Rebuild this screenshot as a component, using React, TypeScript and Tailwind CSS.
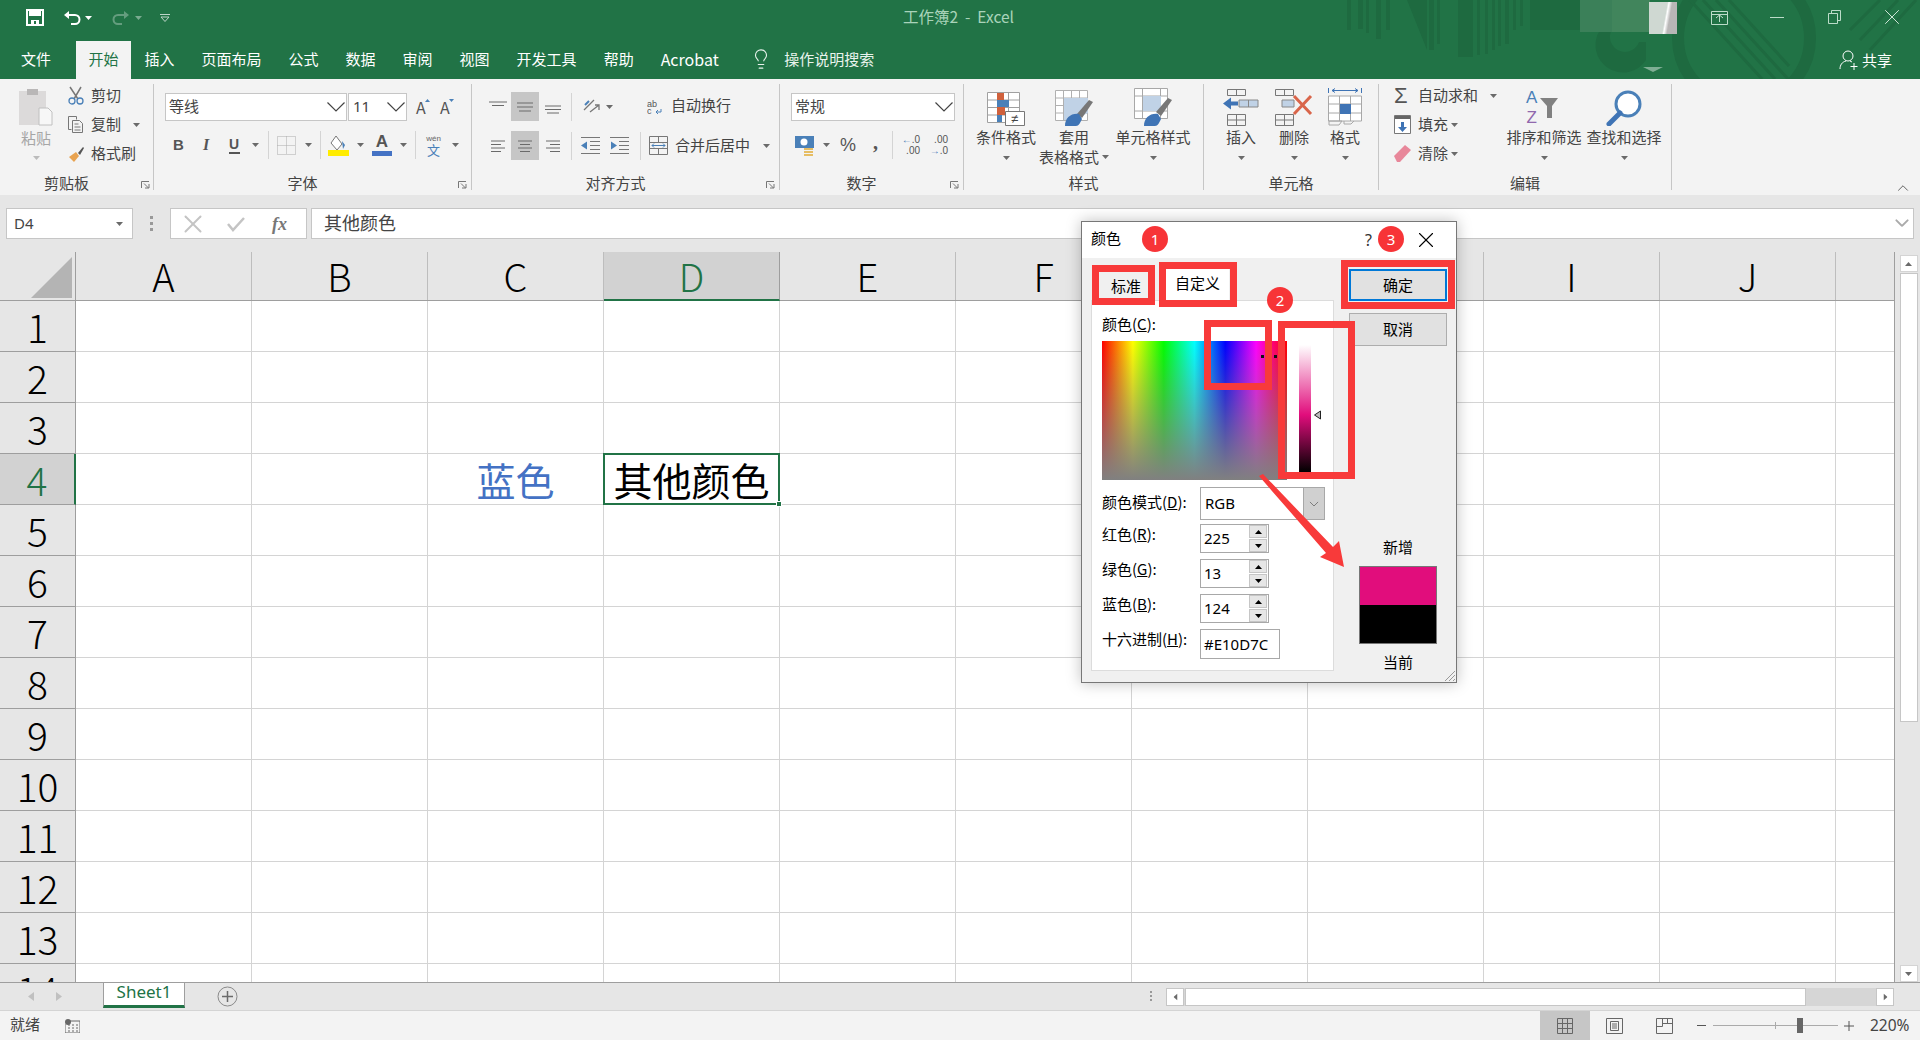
import type { ReactNode } from "react";
import { ChevronUp, Lightbulb, X } from "lucide-react";

const COLS = ["A", "B", "C", "D", "E", "F", "G", "H", "I", "J"];
// G and H sit behind the dialog
const HIDDEN_COLS = ["G", "H"];
const ROWS = [1, 2, 3, 4, 5, 6, 7, 8, 9, 10, 11, 12, 13, 14];
const TABS = ["插入", "页面布局", "公式", "数据", "审阅", "视图", "开发工具", "帮助"];

function Caret({ className = "" }: { className?: string }) {
  return (
    <svg width="7" height="4" viewBox="0 0 7 4" className={`shrink-0 ${className}`}>
      <path d="M0 0h7L3.5 4z" fill="#6a6a6a" />
    </svg>
  );
}

function Chev({ className = "" }: { className?: string }) {
  return (
    <svg width="18" height="10" viewBox="0 0 18 10" className={`shrink-0 ${className}`}>
      <path d="M.5.5L9 9 17.5.5" fill="none" stroke="#444" strokeWidth="1.2" />
    </svg>
  );
}

function Launcher({ className }: { className: string }) {
  return (
    <svg width="9" height="8" viewBox="0 0 9 8" className={`absolute bottom-[6px] ${className}`}>
      <path d="M.5 7V.5H8M3 2.5l4.5 4.5M4 7h4V3" fill="none" stroke="#777" />
    </svg>
  );
}

function Group({ width, label, launcher, children }: { width: string; label: string; launcher?: string; children: ReactNode }) {
  return (
    <div className={`relative flex h-full shrink-0 ${width}`}>
      <div className="flex min-w-0 flex-1 flex-col">
        <div className="h-[94px]">{children}</div>
        <div className={launcher ? "flex h-[20px] items-center justify-center pb-[2px] pr-[20px] text-[15px] leading-none text-[#444]" : "flex h-[20px] items-center justify-center pb-[2px] text-[15px] leading-none text-[#444]"}>
          <span>{label}</span>
        </div>
      </div>
      {launcher && <Launcher className={launcher} />}
      <div className="my-[5px] w-px bg-[#c6c6c6]" />
    </div>
  );
}

function Combo({ width, text }: { width: string; text: string }) {
  return (
    <div className={`flex h-[28px] items-center border border-[#c6c6c6] bg-white pb-px pl-[3px] pr-px text-[15px] text-[#444] ${width}`}>
      <span>{text}</span>
      <Chev className="ml-auto mt-px" />
    </div>
  );
}

function VDivider({ className }: { className: string }) {
  return <div className={`h-[28px] w-px bg-[#d4d4d4] ${className}`} />;
}

// small lines used by all six align buttons
function Lines({ d, className = "" }: { d: string; className?: string }) {
  return (
    <svg width="18" height="16" viewBox="0 0 18 16" className={className}>
      <path d={d} fill="none" stroke="#6a6a6a" strokeWidth="1" />
    </svg>
  );
}

function BigButton({ width, icon, text, second }: { width: string; icon: ReactNode; text: string; second?: string }) {
  return (
    <div className={`flex shrink-0 flex-col items-center ${width}`}>
      <div className="flex h-[47px] items-end justify-center">{icon}</div>
      <div className="mt-px flex h-[20px] items-center whitespace-nowrap text-[15px] text-[#444]">{text}</div>
      {second ? (
        <div className="flex h-[20px] items-center gap-[3px] whitespace-nowrap text-[15px] text-[#444]">
          <span>{second}</span>
          <Caret />
        </div>
      ) : (
        <div className="flex h-[22px] items-center">
          <Caret />
        </div>
      )}
    </div>
  );
}

function SmallRow({ icon, text, caret }: { icon: ReactNode; text: string; caret?: ReactNode }) {
  return (
    <div className="flex h-[29px] items-center text-[15px] text-[#444]">
      {icon}
      <span className="whitespace-nowrap">{text}</span>
      {caret}
    </div>
  );
}

function TitleArt() {
  return (
    <svg width="600" height="79" viewBox="1320 0 600 79" className="pointer-events-none absolute right-0 top-0">
      <g fill="#1e6a40">
        <path d="M1347 0h4v30h-4zM1358 0h5v29h-5zM1366 0h3v33h-3zM1376 0h5v39h-5zM1386 0h4v30h-4zM1429 0h5v50h-5zM1437 0h3v44h-3zM1458 0h15v57h-15zM1477 0h3v55h-3zM1485 0h3v54h-3zM1492 0h3v50h-3zM1498 0h3v46h-3zM1505 0h4v44h-4zM1513 0h3v30h-3zM1520 0h3v26h-3z" />
        <path d="M1407 0h20v50zM1530 0h52v30h-52z" />
        <path d="M1600 30a27 27 0 1 0 46 30v-18h-7a15 15 0 1 1-12-20v-1z" />
      </g>
      <rect x="1580" y="0" width="70" height="32" fill="#3b8059" />
      <rect x="1612" y="0" width="38" height="32" fill="#46885f" opacity=".6" />
      <circle cx="1744" cy="38" r="66" fill="none" stroke="#1e6a40" strokeWidth="12" />
      <path d="M1690 0l72 79M1703 0l72 79M1716 0l72 79M1729 0l60 66M1850 30l30-30M1860 40l38-40M1870 50l46-50" stroke="#1e6a40" strokeWidth="3" fill="none" />
      <path d="M1643 67h20l-10 5z" fill="#7fae94" />
    </svg>
  );
}

function TitleBar() {
  return (
    <div className="relative flex h-[41px] shrink-0 items-center pb-[6px]">
      <svg width="18" height="17" viewBox="0 0 18 17" className="ml-[26px]">
        <path d="M1 1h16v15H1z" fill="none" stroke="#fff" strokeWidth="2" />
        <path d="M3 1h12v6H3zM5 11h8v5H5z" fill="#fff" />
        <path d="M8 12h2v3H8z" fill="#217346" />
      </svg>
      <svg width="18" height="16" viewBox="0 0 18 16" className="ml-[19px]">
        <path d="M5 5h7a4.5 4.5 0 0 1 0 9H8" fill="none" stroke="#fff" strokeWidth="2" />
        <path d="M1 5l5-4v8z" fill="#fff" />
      </svg>
      <Caret className="ml-[4px] [&_path]:fill-white" />
      <svg width="18" height="16" viewBox="0 0 18 16" className="ml-[20px] opacity-30">
        <path d="M13 5H6a4.5 4.5 0 0 0 0 9h4" fill="none" stroke="#fff" strokeWidth="2" />
        <path d="M17 5l-5-4v8z" fill="#fff" />
      </svg>
      <Caret className="ml-[5px] opacity-40 [&_path]:fill-white" />
      <svg width="10" height="8" viewBox="0 0 10 8" className="ml-[18px] opacity-70">
        <path d="M0 .5h10M1 3h8L5 7.5z" fill="none" stroke="#fff" />
      </svg>
      <div className="-mt-[2px] ml-[733px] whitespace-nowrap text-[15.5px] text-[#a9d3ba]">工作簿2&nbsp; -&nbsp; Excel</div>
      <TitleArt />
      <div className="absolute right-[243px] top-[2px] h-[32px] w-[28px] bg-[linear-gradient(100deg,#cfd8d2_55%,#fff_60%,#b8b6b6_70%)]" />
      <svg width="18" height="14" viewBox="0 0 18 14" className="absolute left-[1711px] top-[11px]">
        <path d="M.5.5h16v13H.5zM1 3.5h15M5 7l3.5-3 3.5 3M8.5 4v7" fill="none" stroke="#bcdcc9" />
      </svg>
      <div className="absolute left-[1770px] top-[17px] h-px w-[14px] bg-[#bcdcc9]" />
      <svg width="13" height="14" viewBox="0 0 13 14" className="absolute left-[1828px] top-[10px]">
        <path d="M.5 3.5h9v10h-9zM3.5 3.5V.5h9v10h-3" fill="none" stroke="#bcdcc9" />
      </svg>
      <X size={26} strokeWidth={0.9} className="absolute left-[1879px] top-[4px] text-[#d3e8db]" />
    </div>
  );
}

function TabRow() {
  return (
    <div className="relative flex h-[38px] shrink-0 items-stretch pl-[7px] text-[15px] text-white">
      <div className="flex items-center px-[14px] pb-[2px]">文件</div>
      <div className="ml-[11px] flex w-[55px] items-center justify-center bg-[#f3f3f3] pb-[2px] text-[#217346]">开始</div>
      {TABS.map((t) => (
        <div key={t} className="flex items-center whitespace-nowrap px-[13.5px] pb-[2px]">{t}</div>
      ))}
      <div className="flex items-center whitespace-nowrap px-[13.5px] pb-[2px] text-[16px]">Acrobat</div>
      <div className="ml-[18px] flex items-center pb-[2px] text-[#e9f3ed]">
        <Lightbulb size={22} strokeWidth={1.2} />
        <span className="ml-[12px] text-[15px]">操作说明搜索</span>
      </div>
      <div className="ml-auto mr-[28px] flex items-center gap-[4px] text-[15px]">
        <svg width="19" height="20" viewBox="0 0 19 20">
          <path d="M4 6a5 5 0 1 1 10 0 5 5 0 0 1-10 0zM1 19c0-4 2-7 6-8M11 11l2 1M15 13v7M11.5 16.5h7" fill="none" stroke="#fff" strokeWidth="1" />
        </svg>
        <span>共享</span>
      </div>
    </div>
  );
}

function ClipboardGroup() {
  return (
    <Group width="w-[154px]" label="剪贴板" launcher="left-[141px]">
      <div className="flex">
        <div className="ml-[20px] flex w-[32px] flex-col items-center pt-[9px]">
          <svg width="34" height="38" viewBox="0 0 34 38" className="shrink-0">
            <path d="M0 3h27v34H0z" fill="#dcdada" />
            <path d="M8 1h11v6H8z" fill="#b9b7b7" />
            <path d="M20 20h9l4 4v13H20z" fill="#f7f7f7" stroke="#c0c0c0" />
          </svg>
          <div className="mt-[2px] text-[15px] leading-[20px] text-[#a6a6a6]">粘贴</div>
          <Caret className="mt-[8px] opacity-40" />
        </div>
        <div className="ml-[15px] pt-[2px]">
          <SmallRow
            text="剪切"
            icon={
              <svg width="18" height="19" viewBox="0 0 18 19" className="mr-[6px]">
                <path d="M3 1l8 12M14 1L7 13" stroke="#777" strokeWidth="1.5" fill="none" />
                <circle cx="5" cy="15" r="3" fill="none" stroke="#4a80b8" strokeWidth="1.3" />
                <circle cx="13" cy="15" r="3" fill="none" stroke="#4a80b8" strokeWidth="1.3" />
              </svg>
            }
          />
          <SmallRow
            text="复制"
            caret={<Caret className="ml-[12px]" />}
            icon={
              <svg width="18" height="19" viewBox="0 0 18 19" className="mr-[6px]">
                <path d="M1.5 1.5h8v3M1.5 1.5v13h3M5.5 5.5h7l3 3v9h-10zM7.5 9h4M7.5 12h6M7.5 15h6" stroke="#777" fill="none" />
              </svg>
            }
          />
          <SmallRow
            text="格式刷"
            icon={
              <svg width="18" height="18" viewBox="0 0 18 18" className="mr-[6px]">
                <path d="M11 8l5-6 1 1-4 7z" fill="#555" />
                <path d="M2 12l7-5 3 4-5 6z" fill="#e8a24f" />
              </svg>
            }
          />
        </div>
      </div>
    </Group>
  );
}

function FontGroup() {
  return (
    <Group width="w-[318px]" label="字体" launcher="left-[304px]">
      <div className="flex items-center pl-[11px] pt-[14px]">
        <Combo width="w-[182px]" text="等线" />
        <Combo width="ml-px w-[59px] !pl-[4px] font-['Noto_Sans']" text="11" />
        <span className="ml-[9px] flex h-[16px] w-[13px] items-start text-[16px] leading-[16px] text-[#555]">A</span>
        <svg width="5" height="3" viewBox="0 0 5 3" className="-ml-[4px] -mt-[14px]"><path d="M0 3h5L2.5 0z" fill="#4a80b8" /></svg>
        <span className="ml-[10px] flex h-[16px] w-[13px] items-start text-[16px] leading-[16px] text-[#555]">A</span>
        <svg width="5" height="3" viewBox="0 0 5 3" className="-ml-[4px] -mt-[14px]"><path d="M0 0h5L2.5 3z" fill="#4a80b8" /></svg>
      </div>
      <div className="mt-[10px] flex h-[28px] items-center pl-[19px] text-[#555]">
        <span className="w-[10px] font-['Liberation_Sans'] text-[15px] font-bold">B</span>
        <span className="ml-[20px] w-[8px] font-['Liberation_Serif'] text-[16px] font-bold italic">I</span>
        <span className="ml-[18px] w-[11px] border-b-2 border-[#555] font-['Liberation_Sans'] text-[14px] font-bold leading-[15px]">U</span>
        <Caret className="ml-[12px]" />
        <VDivider className="ml-[9px]" />
        <svg width="19" height="19" viewBox="0 0 19 19" className="ml-[8px]">
          <path d="M.5.5h18v18H.5zM9.5.5v18M.5 9.5h18" fill="none" stroke="#aaa" strokeDasharray="1 1" />
        </svg>
        <Caret className="ml-[9px]" />
        <VDivider className="ml-[8px]" />
        <svg width="21" height="21" viewBox="0 0 21 21" className="ml-[7px]">
          <path d="M8 1l6 8-5 6-6-7z" fill="#fff" stroke="#777" />
          <path d="M14 6l3 4-2 4z" fill="#4a80b8" />
          <path d="M0 15h21v6H0z" fill="#ffec00" />
        </svg>
        <Caret className="ml-[8px]" />
        <div className="ml-[8px] flex w-[20px] flex-col items-center">
          <span className="font-['Liberation_Sans'] text-[17px] font-semibold leading-[16px]">A</span>
          <span className="mt-[1px] h-[5px] w-[20px] bg-[#4472c4]" />
        </div>
        <Caret className="ml-[8px]" />
        <VDivider className="ml-[8px]" />
        <div className="ml-[9px] flex w-[17px] flex-col items-center leading-none text-[#4a80b8]">
          <span className="font-['Liberation_Sans'] text-[8px] text-[#666]">wén</span>
          <span className="text-[13px]">文</span>
        </div>
        <Caret className="ml-[10px]" />
      </div>
    </Group>
  );
}

function AlignGroup() {
  const top = "M0 3h18M3 6.5h12";
  const mid = "M1 4h16M1 8h16M3 12h12";
  const bot = "M1 7h16M1 10.5h16M3 14h12";
  const left = "M2 3h14M2 6.5h10M2 10h14M2 13.5h10";
  const center = "M2 3h14M4 6.5h10M2 10h14M4 13.5h10";
  const right = "M2 3h14M6 6.5h10M2 10h14M6 13.5h10";
  return (
    <Group width="w-[308px]" label="对齐方式" launcher="left-[294px]">
      <div className="flex items-center pl-[17px] pt-[13px]">
        <Lines d={top} />
        <div className="ml-[4px] flex h-[29px] w-[28px] items-center justify-center bg-[#c6c6c6]"><Lines d={mid} /></div>
        <Lines d={bot} className="ml-[5px]" />
        <VDivider className="ml-[9px]" />
        <svg width="19" height="19" viewBox="0 0 19 19" className="ml-[10px]">
          <path d="M2 13L12 3M8 15l9-7M13 8l4 0 0 5" fill="none" stroke="#777" strokeWidth="1.3" />
          <path d="M3 8l4-4" stroke="#4a80b8" strokeWidth="2" />
        </svg>
        <Caret className="ml-[5px]" />
        <svg width="16" height="16" viewBox="0 0 16 16" className="ml-[34px]">
          <text x="0" y="8" fontSize="9" fontFamily="Liberation Sans" fill="#555">ab</text>
          <text x="0" y="15" fontSize="9" fontFamily="Liberation Sans" fill="#555">c</text>
          <path d="M14 10v3H9m2-2l-2 2 2 2" fill="none" stroke="#4a80b8" />
        </svg>
        <span className="mb-[2px] ml-[8px] whitespace-nowrap text-[15px] text-[#444]">自动换行</span>
      </div>
      <div className="mt-[10px] flex items-center pl-[17px]">
        <Lines d={left} />
        <div className="ml-[4px] flex h-[29px] w-[28px] items-center justify-center bg-[#c6c6c6]"><Lines d={center} /></div>
        <Lines d={right} className="ml-[5px]" />
        <VDivider className="ml-[9px]" />
        <svg width="19" height="17" viewBox="0 0 19 17" className="ml-[9px]">
          <path d="M0 .5h19M9 4.5h10M9 8.5h10M9 12.5h10M0 16.5h19" stroke="#777" />
          <path d="M0 8.5l6-4v8z" fill="#4a80b8" />
        </svg>
        <svg width="19" height="17" viewBox="0 0 19 17" className="ml-[10px]">
          <path d="M0 .5h19M9 4.5h10M9 8.5h10M9 12.5h10M0 16.5h19" stroke="#777" />
          <path d="M7 8.5l-6-4v8z" fill="#4a80b8" />
        </svg>
        <VDivider className="ml-[11px]" />
        <svg width="19" height="19" viewBox="0 0 19 19" className="ml-[8px]">
          <path d="M.5.5h18v18H.5zM.5 6.5h18M.5 12.5h18M9.5.5v6M9.5 12.5v6" fill="none" stroke="#777" />
          <path d="M3 9.5h13M5 7.5l-2 2 2 2M14 7.5l2 2-2 2" fill="none" stroke="#4a80b8" />
        </svg>
        <span className="ml-[7px] whitespace-nowrap text-[15px] text-[#444]">合并后居中</span>
        <Caret className="ml-[13px]" />
      </div>
    </Group>
  );
}

function NumberGroup() {
  return (
    <Group width="w-[184px]" label="数字" launcher="left-[170px]">
      <div className="pl-[11px] pt-[14px]">
        <Combo width="w-[164px]" text="常规" />
      </div>
      <div className="mt-[10px] flex h-[28px] items-center pl-[15px] text-[#555]">
        <svg width="20" height="21" viewBox="0 0 20 21">
          <path d="M0 1h19v12H0z" fill="#4a80b8" />
          <circle cx="9" cy="7" r="3.5" fill="#fff" />
          <path d="M9 13h9v2H9zM9 16h9v2H9zM9 19h9v2H9z" fill="#e6bd63" />
        </svg>
        <Caret className="ml-[8px]" />
        <span className="ml-[10px] font-['Liberation_Sans'] text-[18px] leading-none">%</span>
        <span className="ml-[17px] -mt-[6px] font-['Liberation_Serif'] text-[20px] font-bold leading-none">,</span>
        <VDivider className="ml-[14px]" />
        <div className="ml-[10px] flex w-[17px] flex-col items-end font-['Liberation_Sans'] text-[10px] leading-[11px]">
          <span><b className="font-normal text-[#4a80b8]">←</b>.0</span>
          <span>.00</span>
        </div>
        <div className="ml-[11px] flex w-[17px] flex-col items-end font-['Liberation_Sans'] text-[10px] leading-[11px]">
          <span>.00</span>
          <span><b className="font-normal text-[#4a80b8]">→</b>.0</span>
        </div>
      </div>
    </Group>
  );
}

function StylesGroup() {
  return (
    <Group width="w-[240px]" label="样式">
      <div className="flex pl-[7px]">
        <BigButton
          width="w-[70px]"
          text="条件格式"
          icon={
            <svg width="38" height="34" viewBox="0 0 38 34">
              <path d="M.5.5h32v30H.5zM.5 8h32M.5 15.5h32M.5 23h22M10.5.5v30M21.5.5v22" fill="#fff" stroke="#a0a0a0" />
              <path d="M10 1h7v7h-7z" fill="#d0613c" />
              <path d="M10 8h12v7H10z" fill="#4a80b8" />
              <path d="M10 15h8v8h-8z" fill="#d0613c" />
              <path d="M10 23h5v7h-5z" fill="#4a80b8" />
              <path d="M18.5 19.5h19v14h-19z" fill="#fff" stroke="#777" />
              <text x="24" y="31" fontSize="13" fontFamily="Liberation Sans" fill="#444">≠</text>
            </svg>
          }
        />
        <BigButton
          width="w-[66px]"
          text="套用"
          second="表格格式"
          icon={
            <svg width="38" height="36" viewBox="0 0 38 36">
              <path d="M.5.5h32v30H.5zM.5 8h32M.5 15.5h32M.5 23h32M8.5.5v30M16.5.5v30M24.5.5v30" fill="#fff" stroke="#b0b0b0" />
              <path d="M9 8h24v15L18 30H9z" fill="#c0d2e6" />
              <path d="M38 12l-4-2-12 14 5 4z" fill="#777" />
              <path d="M10 36c0-8 6-13 14-12l3 5c-2 4-3 7-6 7z" fill="#3f74b5" />
            </svg>
          }
        />
        <BigButton
          width="w-[92px]"
          text="单元格样式"
          icon={
            <svg width="38" height="38" viewBox="0 0 38 38">
              <path d="M.5.5h33v30H.5zM.5 8h33M.5 23h33M8.5.5v30M26.5.5v30" fill="#fff" stroke="#a8a8a8" />
              <path d="M9 8h18v15H9z" fill="#c0d2e6" />
              <path d="M38 12l-4-2-12 14 5 4z" fill="#777" />
              <path d="M10 38c0-8 6-13 14-12l3 5c-2 4-3 7-6 7z" fill="#3f74b5" />
            </svg>
          }
        />
      </div>
    </Group>
  );
}

function CellsGroup() {
  return (
    <Group width="w-[175px]" label="单元格">
      <div className="flex pl-[12px]">
        <BigButton
          width="w-[50px]"
          text="插入"
          icon={
            <svg width="36" height="37" viewBox="0 0 36 37">
              <path d="M4.5.5h18v6h-18zM4.5 25.5h18v11h-18zM4.5 31h18M13.5.5v6M13.5 25.5v11" fill="none" stroke="#777" />
              <path d="M16 11h19v7H16zM25.5 11v7" fill="#c0d2e6" stroke="#888" />
              <path d="M0 14.5l8-6v4h7v4H8v4z" fill="#3f74b5" />
            </svg>
          }
        />
        <BigButton
          width="w-[56px]"
          text="删除"
          icon={
            <svg width="38" height="37" viewBox="0 0 38 37">
              <path d="M.5.5h18v6H.5zM.5 25.5h18v11H.5zM.5 31h18M9.5.5v6M9.5 25.5v11" fill="none" stroke="#777" />
              <path d="M7 11h12v7H7z" fill="#c0d2e6" stroke="#888" />
              <path d="M19 7l17 18M36 7L19 25" stroke="#d9654a" strokeWidth="3" />
            </svg>
          }
        />
        <BigButton
          width="w-[46px]"
          text="格式"
          icon={
            <svg width="34" height="38" viewBox="0 0 34 38">
              <path d="M.5 0v5M33.5 0v5M4 2.5h26M7 .5L4 2.5l3 2M27 .5l3 2-3 2" fill="none" stroke="#3f74b5" />
              <path d="M.5 8h33v25H.5zM.5 16h33M.5 25h33M11.5 8v25M22.5 8v25" fill="#fff" stroke="#a8a8a8" />
              <path d="M12 16h11v10H12z" fill="#3f74b5" />
              <path d="M1 33v4h10l3-4zM16 33v3h7l3-3" fill="none" stroke="#a8a8a8" />
            </svg>
          }
        />
      </div>
    </Group>
  );
}

function EditGroup() {
  return (
    <Group width="w-[293px]" label="编辑">
      <div className="flex">
        <div className="ml-[15px] w-[110px] pt-[2px]">
          <SmallRow
            text="自动求和"
            caret={<Caret className="ml-[12px]" />}
            icon={<span className="mr-[7px] w-[17px] font-['Liberation_Sans'] text-[22px] leading-none text-[#555]">Σ</span>}
          />
          <SmallRow
            text="填充"
            caret={<Caret className="ml-[3px]" />}
            icon={
              <svg width="17" height="19" viewBox="0 0 17 19" className="mr-[7px]">
                <path d="M.5.5h16v18H.5z" fill="#fff" stroke="#777" />
                <path d="M1 1h15v3H1z" fill="#666" />
                <path d="M7 7h3v5h3l-4.5 5L4 12h3z" fill="#3f74b5" />
              </svg>
            }
          />
          <SmallRow
            text="清除"
            caret={<Caret className="ml-[3px]" />}
            icon={
              <svg width="17" height="17" viewBox="0 0 17 17" className="mr-[7px]">
                <path d="M0 11L11 0l6 5L6 17H3z" fill="#e8879a" />
              </svg>
            }
          />
        </div>
        <BigButton
          width="w-[80px]"
          text="排序和筛选"
          icon={
            <div className="flex h-[38px] w-[36px] items-start font-['Liberation_Sans'] text-[17px] leading-[20px]">
              <div className="flex flex-col items-center">
                <span className="text-[#4a80b8]">A</span>
                <span className="text-[#9068ad]">Z</span>
              </div>
              <svg width="18" height="20" viewBox="0 0 18 20" className="ml-[3px] mt-[10px]">
                <path d="M0 0h18l-6 8v12H7V8z" fill="#808080" />
              </svg>
            </div>
          }
        />
        <BigButton
          width="w-[80px]"
          text="查找和选择"
          icon={
            <svg width="36" height="36" viewBox="0 0 36 36">
              <circle cx="22" cy="14" r="12" fill="#fff" stroke="#4a80b8" strokeWidth="3" />
              <path d="M14 23L3 34" stroke="#3f74b5" strokeWidth="5" strokeLinecap="round" />
            </svg>
          }
        />
      </div>
    </Group>
  );
}

function Ribbon() {
  return (
    <div className="relative flex h-[116px] shrink-0 bg-[#f3f3f3]">
      <ClipboardGroup />
      <FontGroup />
      <AlignGroup />
      <NumberGroup />
      <StylesGroup />
      <CellsGroup />
      <EditGroup />
      <ChevronUp size={18} strokeWidth={1.2} className="absolute left-[1894px] top-[100px] text-[#555]" />
    </div>
  );
}

function FormulaBar() {
  return (
    <div className="flex h-[57px] shrink-0 bg-[#e6e6e6] pl-[6px] pt-[13px]">
      <div className="flex h-[31px] w-[127px] items-center border border-[#c6c6c6] bg-white pl-[7px] font-['Noto_Sans'] text-[15px] text-[#444]">
        <span>D4</span>
        <Caret className="ml-auto mr-[9px]" />
      </div>
      <div className="ml-[16px] flex h-[31px] w-[5px] flex-col items-center justify-center gap-[3px]">
        <span className="size-[3px] bg-[#999]" />
        <span className="size-[3px] bg-[#999]" />
        <span className="size-[3px] bg-[#999]" />
      </div>
      <div className="ml-[16px] flex h-[31px] w-[137px] items-center border border-[#c6c6c6] bg-white pl-[7px]">
        <X size={30} strokeWidth={1.6} className="shrink-0 text-[#c4c4c4]" />
        <svg width="18" height="16" viewBox="0 0 18 16" className="ml-[19px] shrink-0">
          <path d="M1 8l5 6L17 2" fill="none" stroke="#c4c4c4" strokeWidth="2.5" />
        </svg>
        <span className="ml-[27px] font-['Liberation_Serif'] text-[18px] font-bold italic leading-none text-[#777]">fx</span>
      </div>
      <div className="ml-[4px] flex h-[31px] w-[1603px] items-center border border-[#c6c6c6] bg-white pb-[2px] pl-[12px] text-[18px] text-[#444]">
        <span>其他颜色</span>
        <Chev className="ml-auto mr-[2px] scale-75 [&_path]:stroke-[#aaa] [&_path]:stroke-[2.5px]" />
      </div>
    </div>
  );
}

function HeaderRow() {
  return (
    <div className="flex h-[49px] shrink-0 border-b border-[#9e9e9e]">
      <div className="flex w-[76px] shrink-0 border-r border-[#9e9e9e]">
        <svg width="41" height="41" viewBox="0 0 41 41" className="ml-[31px] mt-[5px]">
          <path d="M41 0v41H0z" fill="#b4b4b4" />
        </svg>
      </div>
      {COLS.map((c) => (
        <div
          key={c}
          className={
            c === "D"
              ? "-mb-px flex w-[176px] shrink-0 items-center justify-center border-b-2 border-r border-b-[#217346] border-r-[#9e9e9e] bg-[#d2d2d2] text-[38px] font-light leading-none text-[#217346]"
              : "flex w-[176px] shrink-0 items-center justify-center border-r border-[#bdbdbd] text-[38px] font-light leading-none text-black"
          }
        >
          {HIDDEN_COLS.includes(c) ? null : c}
        </div>
      ))}
    </div>
  );
}

function SheetRow({ n }: { n: number }) {
  const active = n === 4;
  return (
    <div className="flex h-[51px] shrink-0">
      <div
        className={
          active
            ? "flex w-[76px] shrink-0 items-center justify-center border-b border-r-2 border-b-[#9e9e9e] border-r-[#217346] bg-[#d2d2d2] text-[39px] font-light leading-none text-[#217346]"
            : "flex w-[76px] shrink-0 items-center justify-center border-b border-r border-b-[#9e9e9e] border-r-[#9e9e9e] text-[39px] font-light leading-none text-black"
        }
      >
        {n}
      </div>
      {COLS.map((c) => (
        <div
          key={c}
          className={
            active && c === "D"
              ? "relative z-10 flex w-[176px] shrink-0 items-center justify-center border-b border-r border-[#d4d4d4] bg-white text-[39px] leading-none"
              : "relative flex w-[176px] shrink-0 items-center justify-center border-b border-r border-[#d4d4d4] bg-white text-[39px] leading-none"
          }
        >
          {active && c === "C" && <span className="text-[#4472c4]">蓝色</span>}
          {active && c === "D" && (
            <>
              <span className="whitespace-nowrap text-black">其他颜色</span>
              <span className="absolute -inset-x-px -inset-y-px border-2 border-[#217346]" />
              <span className="absolute -bottom-[3px] -right-[3px] size-[6px] border border-white bg-[#217346]" />
            </>
          )}
        </div>
      ))}
      <div className="flex-1 border-b border-[#d4d4d4] bg-white" />
    </div>
  );
}

function VScroll() {
  return (
    <div className="relative z-20 flex w-[26px] shrink-0 flex-col items-center border-l border-[#9e9e9e] bg-[#e6e6e6] pl-[2px] pt-[3px]">
      <div className="flex h-[17px] w-[18px] items-center justify-center border border-[#d4d4d4] bg-white">
        <Caret className="rotate-180" />
      </div>
      <div className="mt-px h-[449px] w-[18px] border border-[#c6c6c6] bg-white" />
      <div className="flex-1" />
      <div className="flex h-[17px] w-[18px] items-center justify-center border border-[#d4d4d4] bg-white">
        <Caret />
      </div>
    </div>
  );
}

function SheetTabs() {
  return (
    <div className="relative z-20 flex h-[29px] shrink-0 border-y border-y-[#9e9e9e] border-b-[#d4d4d4] bg-[#e6e6e6]">
      <svg width="6" height="9" viewBox="0 0 6 9" className="ml-[28px] mt-[9px]"><path d="M6 0v9L0 4.5z" fill="#c0c0c0" /></svg>
      <svg width="6" height="9" viewBox="0 0 6 9" className="ml-[22px] mt-[9px]"><path d="M0 0v9l6-4.5z" fill="#c0c0c0" /></svg>
      <div className="ml-[41px] flex h-[25px] w-[82px] items-center justify-center border-x border-b-[3px] border-x-[#9e9e9e] border-b-[#217346] bg-white pb-[6px] font-['Noto_Sans'] text-[17px] leading-none text-[#217346]">
        Sheet1
      </div>
      <svg width="21" height="21" viewBox="0 0 21 21" className="ml-[32px] mt-[3px]">
        <circle cx="10.5" cy="10.5" r="9.5" fill="none" stroke="#8a8a8a" />
        <path d="M5 10.5h11M10.5 5v11" stroke="#6a6a6a" strokeWidth="1.5" />
      </svg>
      <div className="ml-[912px] mt-[8px] flex w-[3px] flex-col gap-[2px]">
        <span className="size-[2px] bg-[#999]" />
        <span className="size-[2px] bg-[#999]" />
        <span className="size-[2px] bg-[#999]" />
      </div>
      <div className="ml-[13px] mt-[5px] flex h-[18px] w-[728px] bg-[#d6d6d6]">
        <div className="flex w-[18px] items-center justify-center border border-[#c6c6c6] bg-white"><Caret className="rotate-90" /></div>
        <div className="ml-px h-full w-[621px] border border-[#c6c6c6] bg-white" />
        <div className="ml-auto flex w-[18px] items-center justify-center border border-[#c6c6c6] bg-white"><Caret className="-rotate-90" /></div>
      </div>
    </div>
  );
}

function StatusBar() {
  return (
    <div className="relative z-20 flex h-[29px] shrink-0 items-center bg-[#f3f3f3] text-[#444]">
      <span className="mb-[2px] ml-[10px] text-[15px]">就绪</span>
      <svg width="15" height="14" viewBox="0 0 15 14" className="ml-[25px]">
        <path d="M3 2h12v12H0V5" fill="none" stroke="#666" />
        <path d="M3 6h2M7 6h2M11 6h2M3 9h2M7 9h2M11 9h2M3 12h2M7 12h2M11 12h2" stroke="#666" />
        <circle cx="3" cy="3" r="3" fill="#666" />
      </svg>
      <div className="ml-auto flex h-full w-[50px] items-center justify-center bg-[#c6c6c6]">
        <svg width="16" height="16" viewBox="0 0 16 16"><path d="M.5.5h15v15H.5zM5.5.5v15M10.5.5v15M.5 5.5h15M.5 10.5h15" fill="none" stroke="#666" /></svg>
      </div>
      <svg width="17" height="16" viewBox="0 0 17 16" className="ml-[16px]"><path d="M.5.5h16v15H.5zM4.5 3.5h8v9h-8zM6 6h5M6 8h5M6 10h5" fill="none" stroke="#666" /></svg>
      <svg width="17" height="16" viewBox="0 0 17 16" className="ml-[33px]"><path d="M.5.5h16v15H.5zM6.5.5v8h-6M6.5 5.5h10M11.5.5v5" fill="none" stroke="#666" /></svg>
      <div className="ml-[24px] h-px w-[9px] bg-[#555]" />
      <div className="relative ml-[7px] h-px w-[125px] bg-[#aaa]">
        <span className="absolute left-[62px] top-[-3px] h-[7px] w-px bg-[#aaa]" />
        <span className="absolute left-[84px] top-[-7px] h-[15px] w-[6px] bg-[#666]" />
      </div>
      <svg width="10" height="10" viewBox="0 0 10 10" className="ml-[6px]"><path d="M0 5h10M5 0v10" stroke="#555" /></svg>
      <span className="ml-[16px] mr-[10px] w-[40px] font-['Noto_Sans'] text-[15.5px]">220%</span>
    </div>
  );
}

function Spin({ value }: { value: string }) {
  return (
    <div className="flex h-[29px] w-[69px] items-center border border-[#a8a8a8] bg-white pl-[3px] font-['Noto_Sans'] text-[15px] text-black">
      <span>{value}</span>
      <div className="ml-auto mr-px flex h-[27px] w-[18px] flex-col gap-px bg-white">
        <div className="flex flex-1 items-center justify-center border border-[#c6c6c6] bg-[#e6e6e6]"><Caret className="rotate-180 [&_path]:fill-black" /></div>
        <div className="flex flex-1 items-center justify-center border border-[#c6c6c6] bg-[#e6e6e6]"><Caret className="[&_path]:fill-black" /></div>
      </div>
    </div>
  );
}

function Label({ zh, k }: { zh: string; k: string }) {
  return (
    <span className="block whitespace-nowrap text-[15px] leading-[20px] text-black">
      {zh}(<u>{k}</u>):
    </span>
  );
}

function FieldRow({ label, k, labelClass = "", children }: { label: string; k: string; labelClass?: string; children: ReactNode }) {
  return (
    <div className="flex items-start">
      <div className={`w-[98px] ${labelClass}`}>
        <Label zh={label} k={k} />
      </div>
      {children}
    </div>
  );
}

function Badge({ n, className }: { n: number; className: string }) {
  return (
    <span className={`absolute flex size-[26px] items-center justify-center rounded-full bg-[#f73437] font-['Noto_Sans'] text-[15px] leading-none text-white ${className}`}>{n}</span>
  );
}

function Box({ className }: { className: string }) {
  return <span className={`pointer-events-none absolute border-[7px] border-[#f83a3a] ${className}`} />;
}

function ColorDialog() {
  return (
    <div className="absolute left-[1081px] top-[221px] z-30 flex h-[462px] w-[376px] flex-col border border-[#777] bg-[#f0f0f0] shadow-[0_0_14px_rgba(0,0,0,0.25)]">
      <div className="flex h-[36px] shrink-0 items-center bg-white pl-[9px] text-[15px] text-black">
        <span className="-mt-[3px]">颜色</span>
        <span className="ml-auto font-['Noto_Sans'] text-[16px] leading-none text-[#333]">?</span>
        <X size={26} strokeWidth={1} className="ml-[41px] mr-[17px] text-black" />
      </div>
      <div className="flex flex-1">
        <div className="w-[253px] pl-[9px]">
          <div className="flex h-[42px] items-end text-[15px] text-black">
            <div className="ml-[8px] flex h-[28px] w-[49px] items-center justify-end pr-[7px]">标准</div>
            <div className="ml-[18px] flex h-[33px] w-[63px] items-center justify-center bg-white">自定义</div>
          </div>
          <div className="h-[371px] w-[243px] border border-[#dcdcdc] bg-white pl-[10px] pt-[13px]">
            <Label zh="颜色" k="C" />
            <div className="mt-[7px] flex items-start">
              <div className="relative h-[139px] w-[185px] bg-[linear-gradient(to_bottom,transparent,#808080),linear-gradient(to_right,#f00,#ff0,#0f0,#0ff,#00f,#f0f,#f00)]">
                <span className="absolute left-[159px] top-[14px] size-[3px] bg-[#111]" />
                <span className="absolute left-[172px] top-[14px] size-[3px] bg-[#111]" />
              </div>
              <div className="relative ml-[12px] mt-[4px] h-[127px] w-[12px] bg-[linear-gradient(to_bottom,#fff,#e10d7c_55%,#000)]">
                <svg width="8" height="10" viewBox="0 0 8 10" className="absolute left-[15px] top-[65px]">
                  <path d="M.5 5l6-4v8z" fill="#bbb" stroke="#222" />
                </svg>
              </div>
            </div>
            <div className="mt-[7px] flex flex-col gap-[5px]">
              <FieldRow label="颜色模式" k="D" labelClass="pt-[5px]">
                <div className="flex h-[33px] w-[125px] items-center border border-[#a8a8a8] pl-[4px] font-['Noto_Sans'] text-[15px] text-black">
                  <span>RGB</span>
                  <div className="ml-auto flex h-full w-[21px] items-center justify-center border-l border-[#a8a8a8] bg-[#d0d0d0]">
                    <Chev className="scale-50" />
                  </div>
                </div>
              </FieldRow>
              <div className="-mt-px"><FieldRow label="红色" k="R"><Spin value="225" /></FieldRow></div>
              <div className="mt-px"><FieldRow label="绿色" k="G"><Spin value="13" /></FieldRow></div>
              <div className="mt-px"><FieldRow label="蓝色" k="B"><Spin value="124" /></FieldRow></div>
              <div className="mt-px">
                <FieldRow label="十六进制" k="H">
                  <div className="flex h-[30px] w-[80px] items-center border border-[#a8a8a8] pl-[3px] font-['Noto_Sans'] text-[15px] text-black">#E10D7C</div>
                </FieldRow>
              </div>
            </div>
          </div>
        </div>
        <div className="flex flex-col pl-[14px] text-[15px] text-black">
          <div className="mt-[11px] flex h-[32px] w-[98px] items-center justify-center border-2 border-[#0078d7] bg-[#e1e1e1]">确定</div>
          <div className="mt-[12px] flex h-[33px] w-[98px] items-center justify-center border border-[#adadad] bg-[#e1e1e1]">取消</div>
          <div className="mt-[191px] flex h-[20px] w-[98px] items-center justify-center">新增</div>
          <div className="ml-[10px] mt-[9px] flex h-[78px] w-[78px] flex-col border border-[#777]">
            <div className="flex-1 bg-[#e10d7c]" />
            <div className="flex-1 bg-black" />
          </div>
          <div className="mt-[8px] flex h-[20px] w-[98px] items-center justify-center">当前</div>
        </div>
      </div>
      {/* red marks someone drew on the screenshot */}
      <Box className="left-[10px] top-[43px] h-[40px] w-[63px]" />
      <Box className="left-[77px] top-[40px] h-[45px] w-[78px]" />
      <Box className="left-[259px] top-[38px] h-[49px] w-[114px]" />
      <Box className="left-[122px] top-[98px] h-[70px] w-[68px]" />
      <Box className="left-[196px] top-[99px] h-[158px] w-[77px]" />
      <Badge n={1} className="left-[60px] top-[4px]" />
      <Badge n={2} className="left-[185px] top-[65px]" />
      <Badge n={3} className="left-[296px] top-[4px]" />
      <svg width="376" height="462" viewBox="1082 222 376 462" className="pointer-events-none absolute left-0 top-0">
        <path d="M1259 476l4-2 70 73 6-6 5 26-24-10 6-4z" fill="#f83a3a" />
        <path d="M1445 681l10-10M1449 681l6-6M1453 681l2-2" stroke="#999" />
      </svg>
    </div>
  );
}

export default function App() {
  return (
    <div className="relative flex h-[1040px] w-[1920px] flex-col overflow-hidden bg-[#217346] font-['Noto_Sans_CJK_SC','Noto_Sans',sans-serif]">
      <TitleBar />
      <TabRow />
      <Ribbon />
      <FormulaBar />
      <div className="flex min-h-0 flex-1 bg-[#e6e6e6]">
        <div className="min-w-0 flex-1">
          <HeaderRow />
          {ROWS.map((n) => (
            <SheetRow key={n} n={n} />
          ))}
        </div>
        <VScroll />
      </div>
      <SheetTabs />
      <StatusBar />
      <ColorDialog />
    </div>
  );
}
